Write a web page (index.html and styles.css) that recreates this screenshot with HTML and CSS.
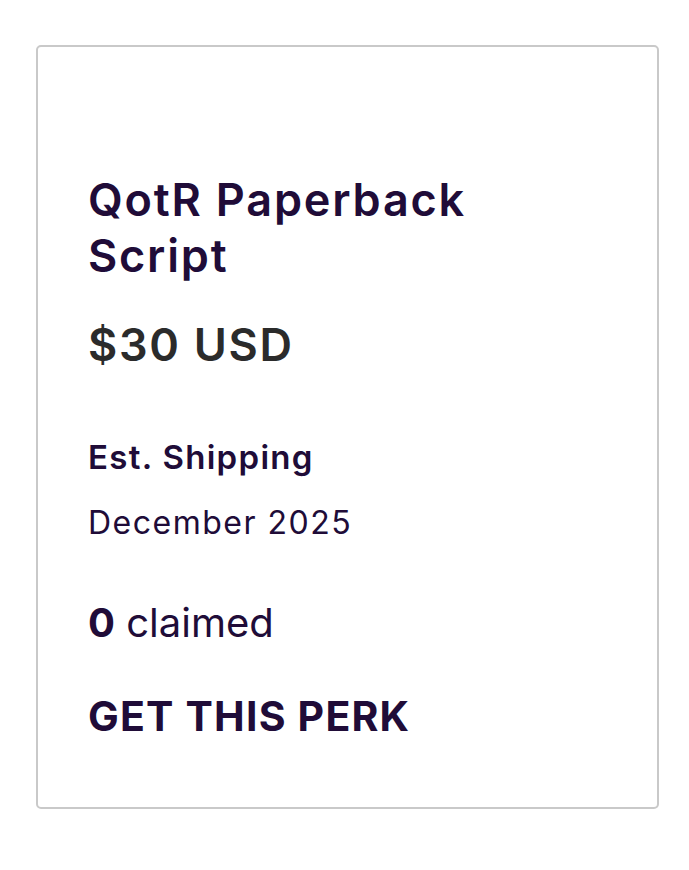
FILE: index.html
```html
<!DOCTYPE html>
<html lang="en">
<head>
<meta charset="utf-8">
<title>Perk</title>
<link rel="stylesheet" href="styles.css">
</head>
<body>
<div class="card">
  <h2 class="title">QotR Paperback<br>Script</h2>
  <div class="price">$30 USD</div>
  <div class="ship-label">Est. Shipping</div>
  <div class="ship-date">December 2025</div>
  <div class="claimed"><span class="count">0</span> claimed</div>
  <div class="cta">GET THIS PERK</div>
</div>
</body>
</html>
```
FILE: styles.css
```css
html, body {
  margin: 0;
  padding: 0;
  background: #ffffff;
}
body {
  font-family: Inter, "Liberation Sans", sans-serif;
  color: #200c38;
}
.card {
  box-sizing: border-box;
  width: 623px;
  height: 764px;
  margin: 45px 0 0 36px;
  border: 2px solid #c9c9c9;
  border-radius: 5px;
  padding: 125px 0 0 50px;
}
.title {
  margin: 0;
  font-size: 45px;
  line-height: 55.7px;
  font-weight: 600;
  letter-spacing: 1.8px;
  color: #200c38;
}
.price {
  margin-top: 35px;
  font-size: 45px;
  line-height: 54px;
  font-weight: 600;
  letter-spacing: 1.7px;
  color: #2b2b2b;
}
.ship-label {
  margin-top: 66px;
  font-size: 33px;
  line-height: 39.6px;
  font-weight: 600;
  letter-spacing: 1.3px;
}
.ship-date {
  margin-top: 26px;
  font-size: 32px;
  line-height: 38.4px;
  font-weight: 400;
  letter-spacing: 1.5px;
}
.claimed {
  margin-top: 56px;
  font-size: 40px;
  line-height: 49.2px;
  font-weight: 400;
}
.count {
  font-weight: 700;
}
.cta {
  margin-top: 44px;
  font-size: 41px;
  line-height: 49.2px;
  font-weight: 700;
  letter-spacing: 1.2px;
}
```
